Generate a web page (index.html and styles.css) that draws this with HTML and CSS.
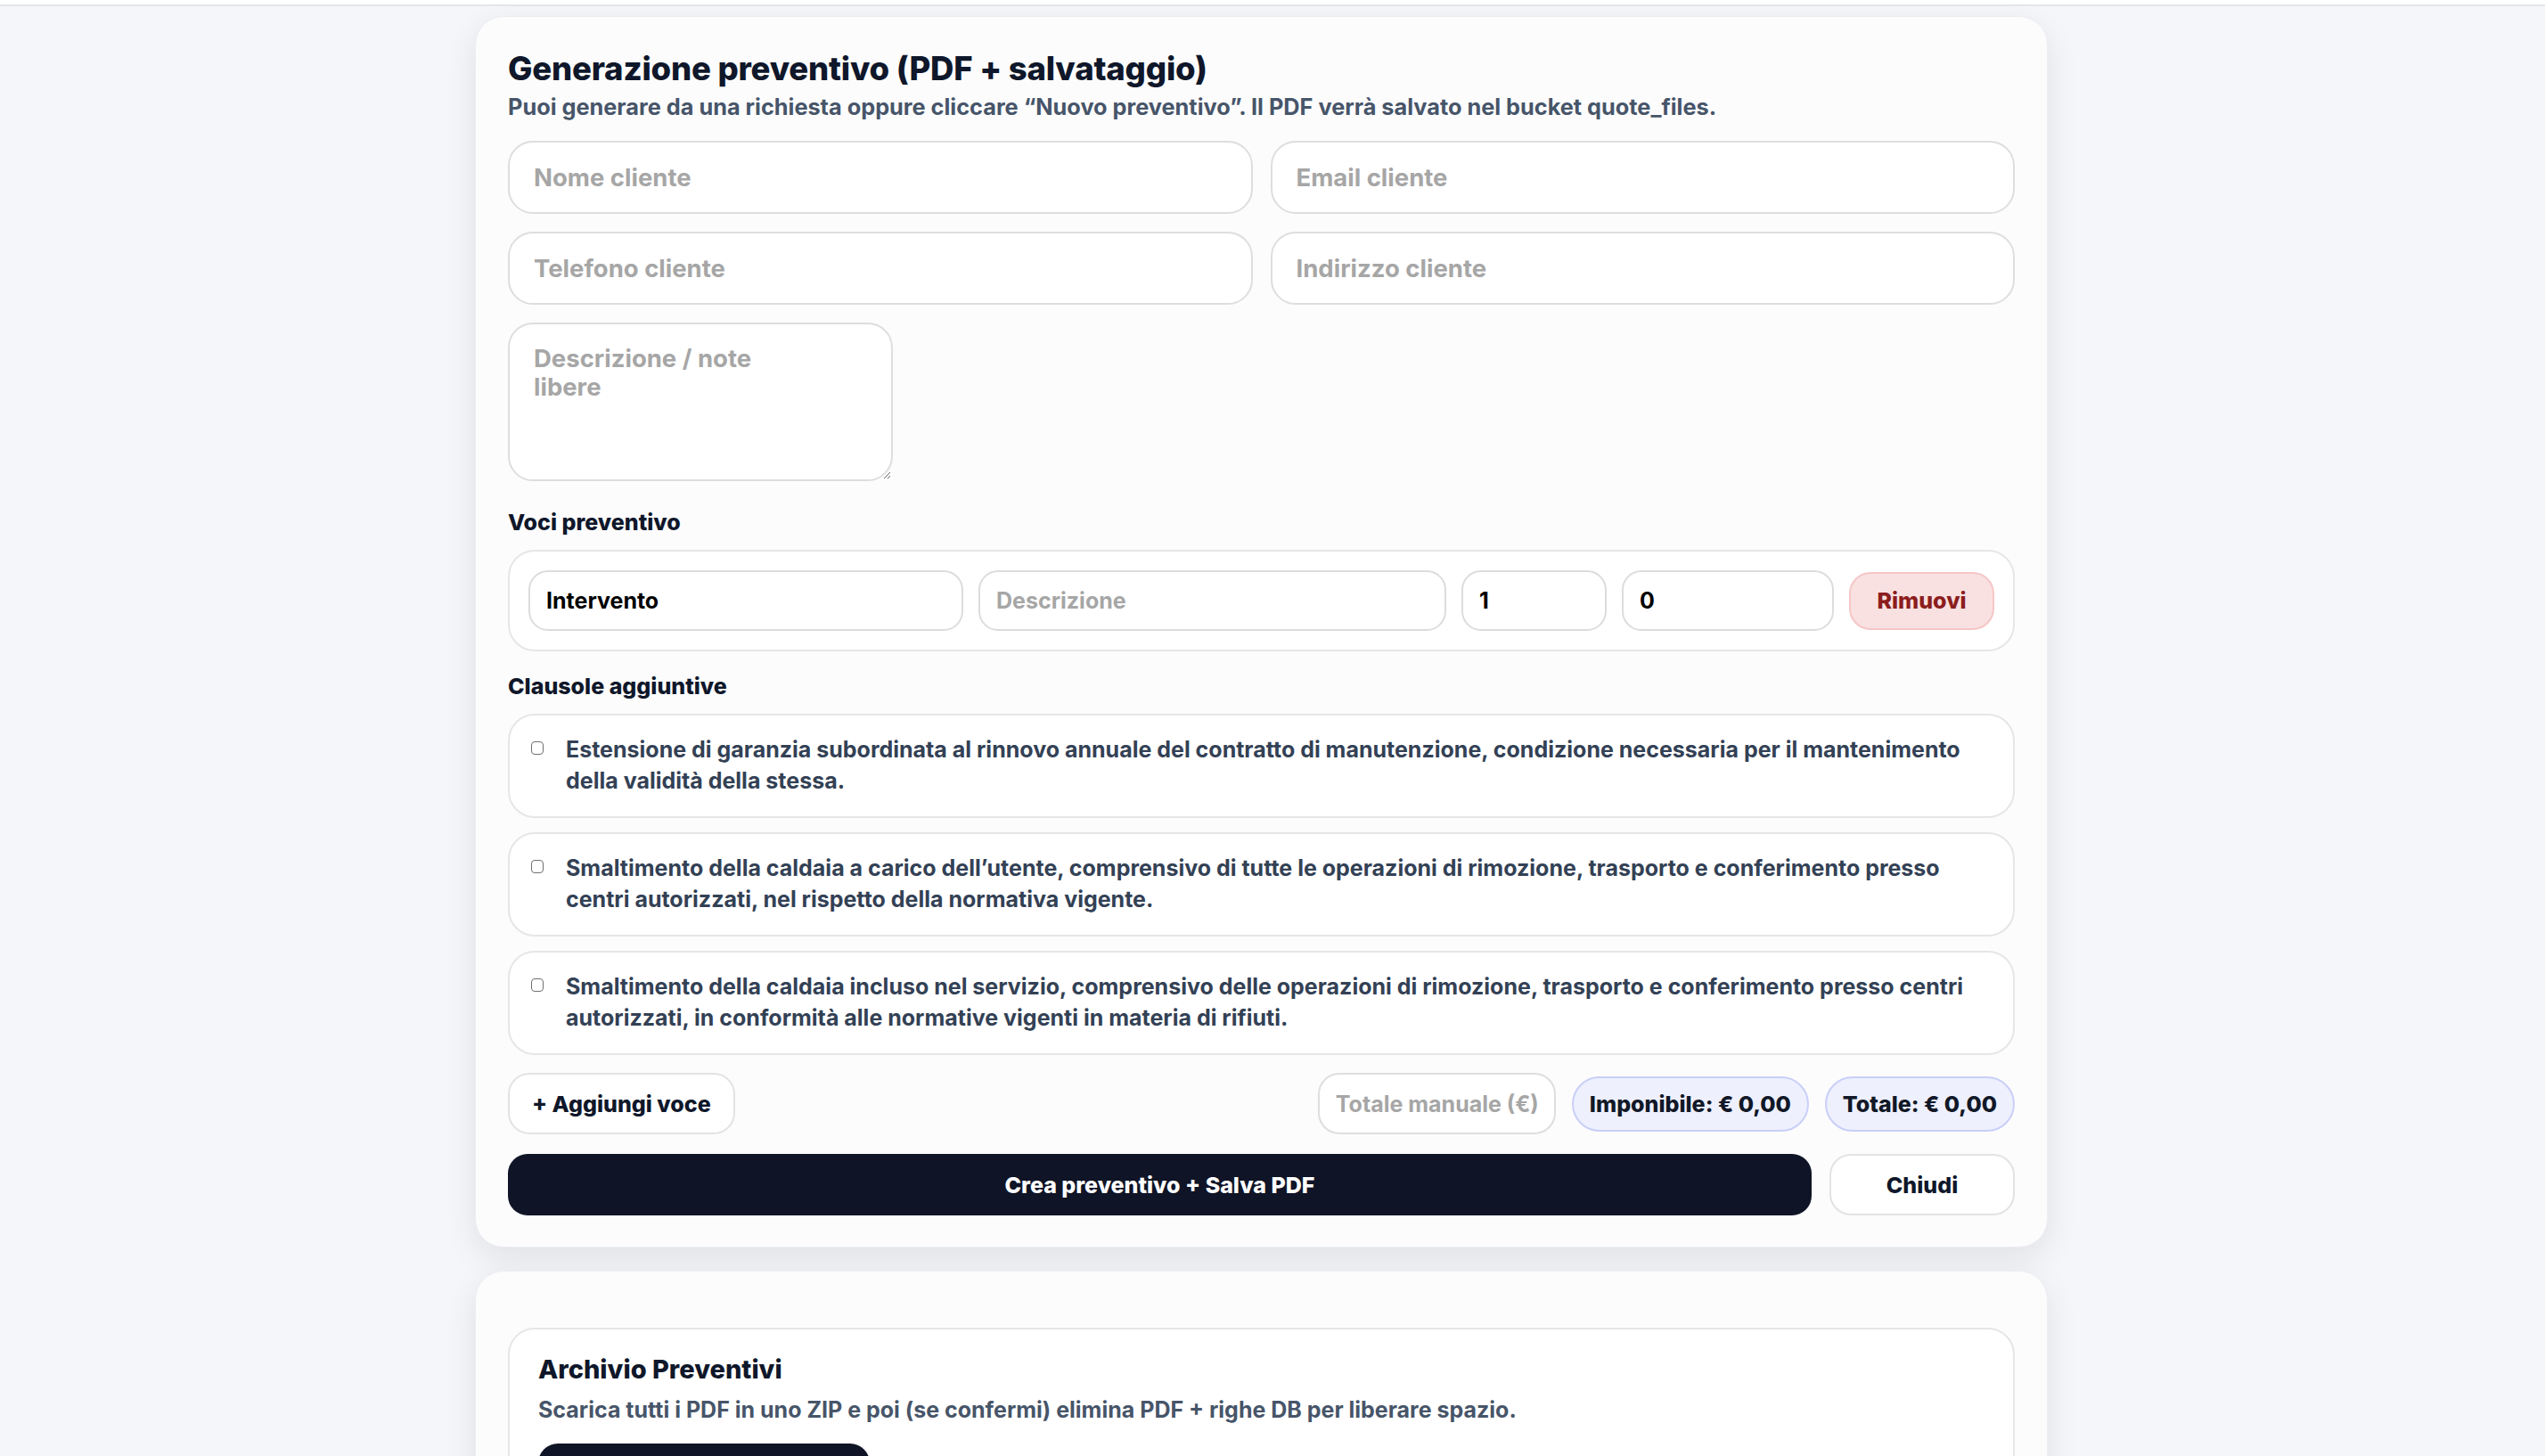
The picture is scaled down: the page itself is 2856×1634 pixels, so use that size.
FILE: index.html
```html
<!DOCTYPE html>
<html lang="it">
<head>
    <meta charset="UTF-8">
    <meta name="viewport" content="width=device-width, initial-scale=1.0">
    <title>Preventivi</title>
    <link rel="stylesheet" href="styles.css">
</head>
<body>
    <div class="topbar"></div>

    <div class="page">
        <section class="card">
            <h2 class="card-title">Generazione preventivo (PDF + salvataggio)</h2>
            <p class="card-sub">Puoi generare da una richiesta oppure cliccare “Nuovo preventivo”. Il PDF verrà salvato nel bucket quote_files.</p>

            <div class="client-grid">
                <input class="field" type="text" placeholder="Nome cliente">
                <input class="field" type="text" placeholder="Email cliente">
                <input class="field" type="text" placeholder="Telefono cliente">
                <input class="field" type="text" placeholder="Indirizzo cliente">
            </div>
            <textarea class="notes" placeholder="Descrizione / note libere"></textarea>

            <div class="section-label">Voci preventivo</div>
            <div class="items-box">
                <div class="item-row">
                    <input class="item-field" type="text" value="Intervento">
                    <input class="item-field" type="text" placeholder="Descrizione">
                    <input class="item-field" type="text" value="1">
                    <input class="item-field" type="text" value="0">
                    <button class="btn-remove">Rimuovi</button>
                </div>
            </div>

            <div class="section-label clauses-label">Clausole aggiuntive</div>
            <div class="clauses">
                <label class="clause">
                    <input type="checkbox">
                    <span>Estensione di garanzia subordinata al rinnovo annuale del contratto di manutenzione, condizione necessaria per il mantenimento della validità della stessa.</span>
                </label>
                <label class="clause">
                    <input type="checkbox">
                    <span>Smaltimento della caldaia a carico dell’utente, comprensivo di tutte le operazioni di rimozione, trasporto e conferimento presso centri autorizzati, nel rispetto della normativa vigente.</span>
                </label>
                <label class="clause">
                    <input type="checkbox">
                    <span>Smaltimento della caldaia incluso nel servizio, comprensivo delle operazioni di rimozione, trasporto e conferimento presso centri autorizzati, in conformità alle normative vigenti in materia di rifiuti.</span>
                </label>
            </div>

            <div class="totals-row">
                <button class="btn-light">+ Aggiungi voce</button>
                <div class="totals">
                    <input class="manual-total" type="text" placeholder="Totale manuale (€)">
                    <span class="pill">Imponibile: € 0,00</span>
                    <span class="pill">Totale: € 0,00</span>
                </div>
            </div>

            <div class="actions">
                <button class="btn-dark">Crea preventivo + Salva PDF</button>
                <button class="btn-light btn-close">Chiudi</button>
            </div>
        </section>

        <section class="card card-archive">
            <div class="archive-box">
                <h3 class="archive-title">Archivio Preventivi</h3>
                <p class="archive-sub">Scarica tutti i PDF in uno ZIP e poi (se confermi) elimina PDF + righe DB per liberare spazio.</p>
                <button class="btn-dark btn-archive">Scarica ZIP</button>
            </div>
        </section>
    </div>
</body>
</html>
```

FILE: styles.css
```css
* {
    box-sizing: border-box;
}

html, body {
    height: 100%;
}

body {
    margin: 0;
    background-color: #f5f6f9;
    font-family: Inter, "Noto Sans", Arial, sans-serif;
    color: #0f172a;
    overflow: hidden;
}

.topbar {
    height: 7px;
    background-color: #ffffff;
    border-bottom: 2px solid #e4e5e9;
}

.page {
    width: 1790px;
    margin: 0 auto;
    padding-right: 25px;
    padding-top: 11px;
}

.card {
    background-color: #fcfcfd;
    border: 1px solid #eceef2;
    border-radius: 32px;
    padding: 36px 36px 35px;
    box-shadow: 0 12px 36px rgba(15, 23, 42, 0.09);
}

.card-title {
    margin: 0;
    font-size: 36.5px;
    line-height: 44px;
    font-weight: 800;
    letter-spacing: -0.2px;
}

.card-sub {
    margin: 5px 0 0;
    font-size: 25.3px;
    line-height: 32px;
    font-weight: 700;
    color: #475569;
}

input, textarea, button {
    font-family: inherit;
}

.client-grid {
    display: grid;
    grid-template-columns: 1fr 1fr;
    gap: 20px;
    margin-top: 22px;
}

.field {
    height: 82px;
    border: 2px solid #dedede;
    border-radius: 28px;
    background-color: #ffffff;
    padding: 0 27px;
    font-size: 27.5px;
    font-weight: 700;
    color: #111111;
    outline: none;
}

.field::placeholder, .notes::placeholder, .item-field::placeholder, .manual-total::placeholder {
    color: #a6a6a6;
}

.notes {
    display: block;
    width: 432px;
    height: 178px;
    margin-top: 20px;
    border: 2px solid #dedede;
    border-radius: 28px;
    background-color: #ffffff;
    padding: 22px 100px 20px 27px;
    font-size: 27.5px;
    line-height: 32px;
    font-weight: 700;
    outline: none;
    resize: vertical;
}

.section-label {
    margin-top: 31px;
    font-size: 25px;
    line-height: 30px;
    font-weight: 800;
}

.items-box {
    margin-top: 16px;
    border: 2px solid #e6e6e6;
    border-radius: 30px;
    background-color: #ffffff;
    padding: 21px;
}

.item-row {
    display: grid;
    grid-template-columns: 488px 525px 163px 238px 1fr;
    gap: 17px;
    align-items: center;
}

.item-field {
    height: 68px;
    border: 2px solid #dcdcdc;
    border-radius: 22px;
    background-color: #ffffff;
    padding: 0 18px;
    font-size: 25px;
    font-weight: 700;
    color: #000000;
    outline: none;
    min-width: 0;
}

.btn-remove {
    height: 65px;
    border: 2px solid #f6c6c6;
    border-radius: 24px;
    background-color: #f9e1e1;
    color: #8c1d1d;
    font-size: 25px;
    font-weight: 800;
}

.clauses-label {
    margin-top: 24px;
}

.clauses {
    display: flex;
    flex-direction: column;
    gap: 16px;
    margin-top: 16px;
}

.clause {
    display: flex;
    align-items: flex-start;
    gap: 25px;
    min-height: 117px;
    border: 2px solid #e6e6e6;
    border-radius: 30px;
    background-color: #ffffff;
    padding: 21px 24px 22px;
    font-size: 25px;
    line-height: 35px;
    font-weight: 700;
    color: #334155;
}

.clause input {
    appearance: none;
    -webkit-appearance: none;
    flex: none;
    width: 14px;
    height: 15px;
    margin: 8px 0 0;
    border: 1.5px solid #707070;
    border-radius: 4px;
    background-color: #ffffff;
}

.totals-row {
    display: flex;
    justify-content: space-between;
    align-items: center;
    margin-top: 20px;
}

.totals {
    display: flex;
    align-items: center;
    gap: 18px;
}

.btn-light {
    height: 69px;
    padding: 0 25px;
    border: 2px solid #e3e3e3;
    border-radius: 24px;
    background-color: #ffffff;
    color: #0f172a;
    font-size: 25px;
    font-weight: 800;
}

.manual-total {
    width: 267px;
    height: 69px;
    border: 2px solid #dedede;
    border-radius: 24px;
    background-color: #ffffff;
    padding: 0 18px;
    font-size: 25px;
    font-weight: 700;
    outline: none;
}

.pill {
    display: flex;
    align-items: center;
    height: 62px;
    padding: 0 18px;
    border: 2px solid #c9cff7;
    border-radius: 999px;
    background-color: #eef0fe;
    font-size: 25px;
    font-weight: 800;
    color: #111827;
}

.actions {
    display: flex;
    gap: 20px;
    margin-top: 22px;
}

.btn-dark {
    height: 69px;
    border: none;
    border-radius: 22px;
    background-color: #0f1426;
    color: #ffffff;
    font-size: 25px;
    font-weight: 800;
}

.actions .btn-dark {
    flex: 1;
}

.btn-close {
    width: 208px;
}

.card-archive {
    margin-top: 26px;
    padding-top: 63px;
}

.archive-box {
    border: 2px solid #e6e6e6;
    border-radius: 30px;
    background-color: #ffffff;
    padding: 25px 32px 40px;
}

.archive-title {
    margin: 0;
    font-size: 29px;
    line-height: 40px;
    font-weight: 800;
}

.archive-sub {
    margin: 9px 0 0;
    font-size: 25px;
    line-height: 32px;
    font-weight: 700;
    color: #475569;
}

.btn-archive {
    width: 372px;
    margin-top: 22px;
}
```
